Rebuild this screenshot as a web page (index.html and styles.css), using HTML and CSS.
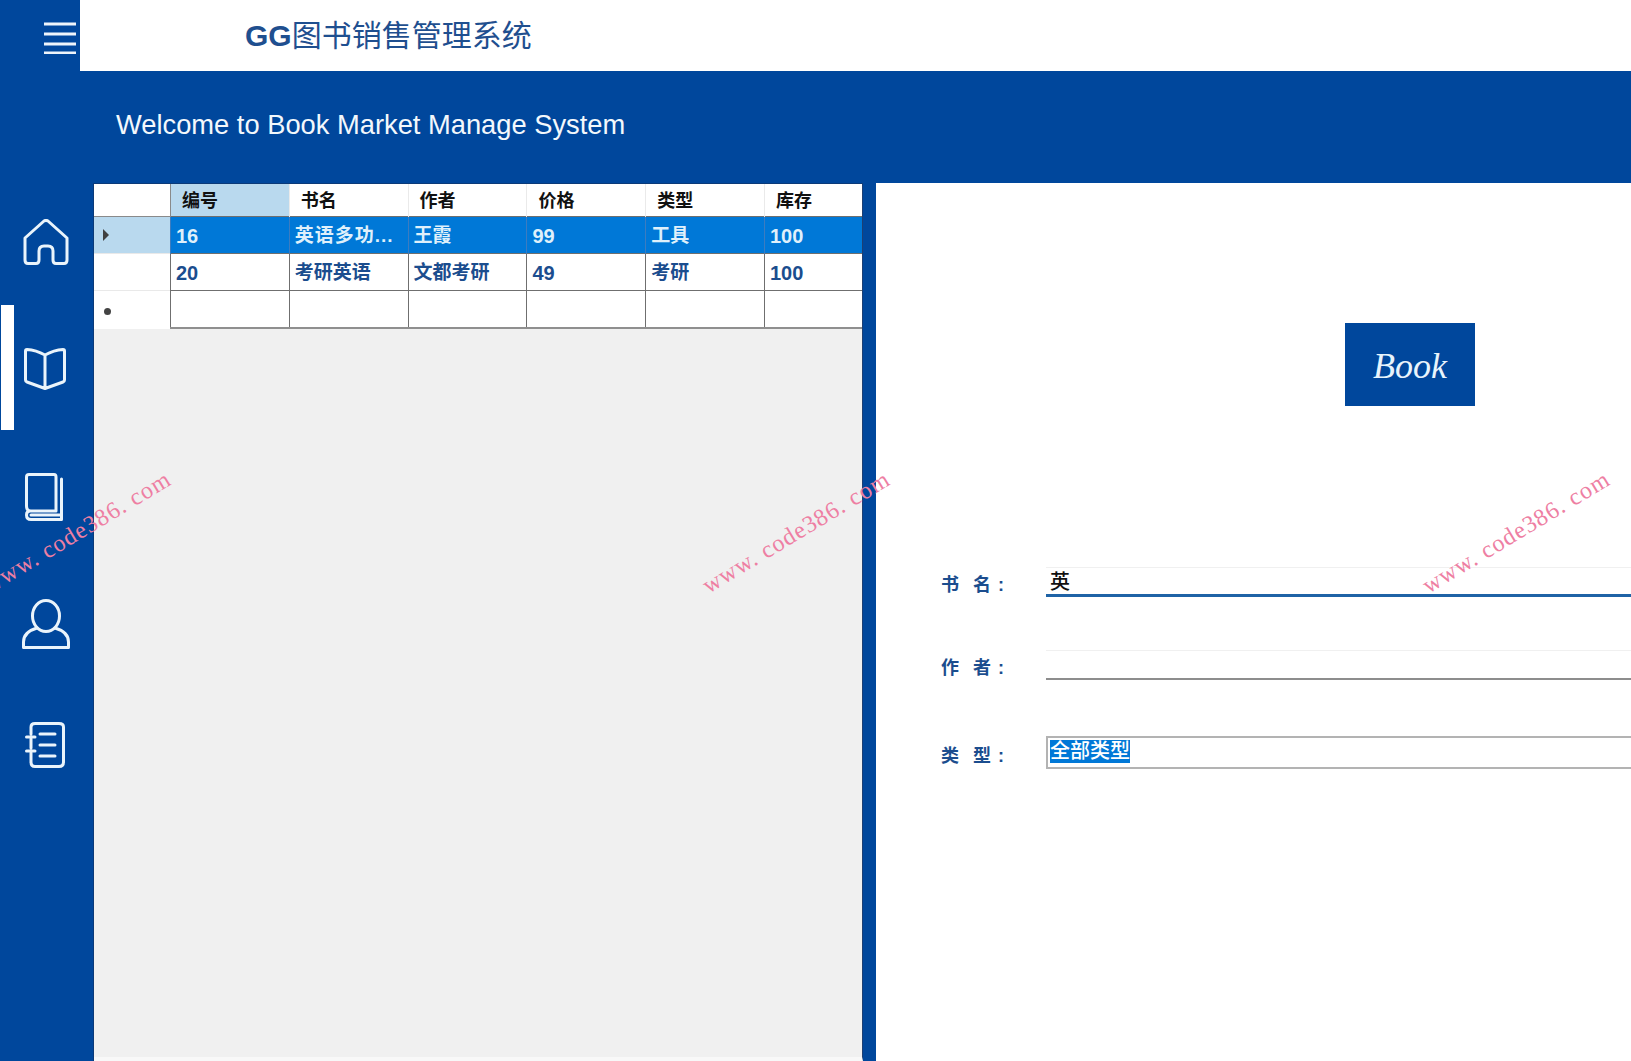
FILE: index.html
```html
<!DOCTYPE html>
<html lang="zh-CN">
<head>
<meta charset="utf-8">
<title>GG图书销售管理系统</title>
<link rel="stylesheet" href="styles.css">
</head>
<body>
<div class="app">
  <header class="topbar">
    <div class="menu-btn">
      <svg width="32" height="32" viewBox="0 0 32 32"><path d="M0 2h32M0 12h32M0 22h32M0 31h32" class="menu-lines"/></svg>
    </div>
    <div class="titlebar"><h1 class="title"><span class="title-gg">GG</span>图书销售管理系统</h1></div>
  </header>
  <div class="banner">Welcome to Book Market Manage System</div>
  <main class="main">
    <nav class="sidebar">
      <div class="nav-item nav-first">
        <svg class="ico" width="46" height="46" viewBox="0 0 46 46"><path d="M2 19 L21 2 Q23 .8 25 2 L44 19 V41 Q44 44.500 41 44.500 H33 Q30 44.500 30 41 V32 Q30 27 25 27 H21 Q16 27 16 32 V41 Q16 44.500 13 44.500 H5 Q2 44.500 2 41 Z"/></svg>
      </div>
      <div class="nav-item nav-active">
        <svg class="ico" width="42" height="42" viewBox="0 0 42 42"><path d="M21 7 Q12 2 3 1.500 Q1.500 1.500 1.500 3 V32 Q1.500 33.500 3 34 L21 40.500 L39 34 Q40.500 33.500 40.500 32 V3 Q40.500 1.500 39 1.500 Q30 2 21 7 Z M21 7 V40.500"/></svg>
      </div>
      <div class="nav-item nav-low">
        <svg class="ico" width="38" height="48" viewBox="0 0 38 48"><path d="M31 38 H6 Q1.500 38 1.500 33 V4 Q1.500 1.500 4 1.500 H29 Q31 1.500 31 4 V38 H5 Q1.500 38 1.500 42 Q1.500 46.500 6 46.500 H36.500 V6 M6 42 H36"/></svg>
      </div>
      <div class="nav-item nav-user">
        <svg class="ico" width="48" height="50" viewBox="0 0 48 50"><ellipse cx="24" cy="17" rx="13.500" ry="15.500"/><path d="M15 29 Q1.500 33 1.500 43 V48.500 H46.500 V43 Q46.500 33 33 29"/></svg>
      </div>
      <div class="nav-item nav-last">
        <svg class="ico" width="40" height="46" viewBox="0 0 40 46"><path d="M6 12 V5 Q6 1.500 10 1.500 H34 Q38.500 1.500 38.500 5 V40 Q38.500 44.500 34 44.500 H10 Q6 44.500 6 40 V31 M6 17 V26 M1.500 15 H10 M1.500 29 H10 M15 12 H30 M15 23 H30 M15 34 H30"/></svg>
      </div>
    </nav>
    <section class="grid-panel">
      <table class="grid">
        <colgroup>
          <col class="col-head"><col class="col-std"><col class="col-std"><col class="col-std"><col class="col-std"><col class="col-std"><col>
        </colgroup>
        <thead>
          <tr>
            <th class="corner"></th>
            <th class="th-active">编号</th><th>书名</th><th>作者</th><th>价格</th><th>类型</th><th>库存</th>
          </tr>
        </thead>
        <tbody>
          <tr class="row-selected">
            <td class="rowhead rowhead-active"><span class="arrow"></span></td>
            <td class="num">16</td><td class="ellipsis">英语多功...</td><td>王霞</td><td class="num">99</td><td>工具</td><td class="num">100</td>
          </tr>
          <tr>
            <td class="rowhead"></td>
            <td class="num">20</td><td>考研英语</td><td>文都考研</td><td class="num">49</td><td>考研</td><td class="num">100</td>
          </tr>
          <tr class="row-new">
            <td class="rowhead"><span class="dot"></span></td>
            <td></td><td></td><td></td><td></td><td></td><td></td>
          </tr>
        </tbody>
      </table>
    </section>
    <section class="form-panel">
      <div class="book-btn">Book</div>
      <div class="form">
        <div class="form-row">
          <label class="form-label">书 名<span class="colon">:</span></label>
          <div class="field field-focus">英</div>
        </div>
        <div class="form-row form-row-author">
          <label class="form-label">作 者<span class="colon">:</span></label>
          <div class="field"></div>
        </div>
        <div class="form-row form-row-type">
          <label class="form-label">类 型<span class="colon">:</span></label>
          <div class="field field-select"><span class="selected-text">全部类型</span></div>
        </div>
      </div>
    </section>
  </main>
  <div class="wm wm-1">www. code386. com</div>
  <div class="wm wm-2">www. code386. com</div>
  <div class="wm wm-3">www. code386. com</div>
</div>
</body>
</html>
```
FILE: styles.css
```css
* { box-sizing: border-box; }
html, body { margin: 0; padding: 0; height: 100%; overflow: hidden; }
body { font-family: "Liberation Sans", "Noto Sans CJK SC", sans-serif; background: #00479c; }

.app { position: relative; width: 1631px; height: 1061px; display: flex; flex-direction: column; overflow: hidden; background: #00479c; }

.topbar { display: flex; height: 71px; flex: none; }
.menu-btn { width: 80px; flex: none; padding: 22px 4px 0 44px; }
.menu-btn svg { display: block; }
.menu-lines { stroke: #eef5fb; stroke-width: 3.200; fill: none; }
.titlebar { flex: 1; background: #fff; padding-left: 165px; display: flex; align-items: center; }
.title { margin: 0; font-size: 30px; font-weight: 400; color: #1f4f8f; line-height: 1; font-family: "Liberation Sans", "Noto Sans CJK SC", sans-serif; }
.title-gg { font-weight: 700; }

.banner { height: 112px; flex: none; padding: 36px 0 0 116px; color: #f3f8fc; font-size: 27.300px; line-height: 36px; }

.main { flex: 1; display: flex; min-height: 0; }

.sidebar { width: 94px; flex: none; display: flex; flex-direction: column; border-right: 1px solid #0b3a78; }
.nav-item { height: 125.500px; display: flex; align-items: center; padding-left: 25px; flex: none; position: relative; }
.nav-first { height: 122px; padding-left: 23px; padding-bottom: 5px; }
.nav-active { padding-top: 2px; padding-left: 24px; }
.nav-active::before { content: ""; position: absolute; left: 1px; top: 0; width: 13px; height: 125px; background: #fff; }
.nav-low { padding-top: 7px; }
.nav-user { padding-top: 11px; padding-left: 22px; }
.nav-last { padding-top: 2px; }
.ico { display: block; fill: none; stroke: #eaf4fb; stroke-width: 3; stroke-linejoin: round; stroke-linecap: round; }

.grid-panel { width: 769px; flex: none; background: #f0f0f0; border-top: 1px solid #0b3a78; border-right: 1px solid #1d3f73; border-bottom: 4px solid #f8f8f8; }
.grid { width: 100%; table-layout: fixed; border-collapse: collapse; background: #fff; font-family: "Liberation Sans", "Noto Sans CJK SC", sans-serif; }
.col-head { width: 76.500px; }
.col-std { width: 118.800px; }
.grid th { height: 32px; padding: 2px 0 0 11px; text-align: left; font-size: 18px; font-weight: 700; color: #111; border-left: 1px solid #eaeaea; line-height: 1; }
.grid .corner { border-left: 0; }
.grid .th-active { background: #b9d9ee; border-left: 1px solid #8a8a8a; }
.grid td { height: 37px; padding: 2px 0 0 5px; font-size: 19px; font-weight: 700; color: #1b4d8e; border-left: 1px solid #6f6f6f; border-top: 1px solid #6f6f6f; white-space: nowrap; overflow: hidden; line-height: 1; }
.grid .num { font-size: 20px; }
.grid tr:last-child td { height: 38px; border-bottom: 2px solid #8f8f8f; }
.grid .rowhead { border-left: 0; border-top: 1px solid #e9e9e9; padding: 1px 0 0 9px; }
.grid tr:first-child .rowhead { border-top: 1px solid #8a8a8a; }
.grid tr:last-child .rowhead { border-bottom: 0; }
.row-selected td { background: #0078d7; color: #dff0fb; font-weight: 700; }
.grid .row-selected td { color: #dff0fb; border-left-color: #3c7cc0; }
.grid .rowhead-active { background: #b9d9ee; }
.grid .ellipsis { letter-spacing: 1px; }
.arrow { display: block; width: 0; height: 0; border-left: 6px solid #404040; border-top: 6px solid transparent; border-bottom: 6px solid transparent; }
.dot { display: block; width: 7px; height: 7px; margin: 4px 0 0 1px; border-radius: 50%; background: #444; }

.form-panel { margin-left: 13px; flex: 1; background: #fff; padding-top: 140px; min-width: 0; overflow: hidden; }
.book-btn { width: 130px; height: 83px; margin-left: 469px; background: #00479c; color: #e8f4fc; font-family: "Liberation Serif", serif; font-style: italic; font-size: 36px; padding-top: 2px; display: flex; align-items: center; justify-content: center; }
.form { margin-top: 161px; padding-left: 65px; display: flex; flex-direction: column; }
.form-row { display: flex; align-items: center; }
.form-row-author { margin-top: 53px; }
.form-row-type { margin-top: 56px; }
.form-label { width: 105px; flex: none; font-size: 18px; font-weight: 700; color: #1b4d8e; word-spacing: 9px; line-height: 1; padding-top: 6px; }
.colon { margin-left: 7px; }
.field { flex: 1; height: 30px; background: #fff; border-top: 1px solid #f0f0f0; border-bottom: 2px solid #8d8d8d; font-size: 20px; font-weight: 500; color: #111; line-height: 28px; padding-left: 4px; }
.field-focus { height: 30px; border-bottom: 3px solid #1f63a6; }
.field-select { height: 33px; border: 2px solid #b3b3b3; border-right: 0; padding: 2px 0 0 2px; color: #fff; line-height: 22px; }
.selected-text { display: inline-block; background: #0078d7; color: #fff; height: 23px; line-height: 23px; }

.wm { position: absolute; width: 220px; text-align: center; color: #ee7fa3; font-family: "Liberation Serif", serif; font-size: 24px; letter-spacing: 1px; line-height: 1; white-space: nowrap; transform: rotate(-31deg); transform-origin: center; }
.wm-1 { left: -33px; top: 520px; }
.wm-2 { left: 686px; top: 520px; }
.wm-3 { left: 1406px; top: 520px; }
```
